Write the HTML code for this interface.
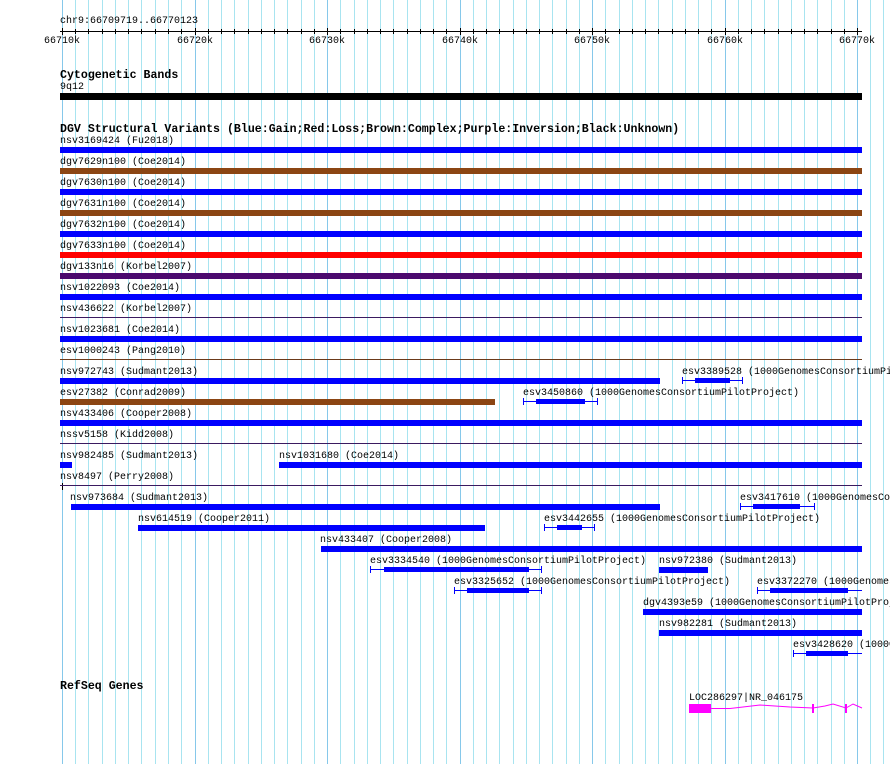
<!DOCTYPE html>
<html><head><meta charset="utf-8"><style>
html,body{overflow:hidden}
body{margin:0;width:890px;height:764px;background:#fff;position:relative;overflow:hidden;font-family:"Liberation Mono",monospace;font-size:10px;color:#000}
.t{position:absolute;white-space:nowrap;line-height:10px;margin-top:2px}
.h{position:absolute;white-space:nowrap;font-weight:bold;font-size:11.6px;line-height:12px;margin-top:2px}
.b{position:absolute;height:6px}
.l{position:absolute;height:1px}
</style></head><body>
<svg width="890" height="764" style="position:absolute;left:0;top:0">
<path stroke="#a8e4f0" stroke-width="1" d="M75.5 0V764M88.5 0V764M102.5 0V764M115.5 0V764M128.5 0V764M141.5 0V764M155.5 0V764M168.5 0V764M181.5 0V764M208.5 0V764M221.5 0V764M234.5 0V764M248.5 0V764M261.5 0V764M274.5 0V764M287.5 0V764M301.5 0V764M314.5 0V764M340.5 0V764M354.5 0V764M367.5 0V764M380.5 0V764M393.5 0V764M407.5 0V764M420.5 0V764M433.5 0V764M446.5 0V764M473.5 0V764M486.5 0V764M499.5 0V764M513.5 0V764M526.5 0V764M539.5 0V764M552.5 0V764M566.5 0V764M579.5 0V764M605.5 0V764M619.5 0V764M632.5 0V764M645.5 0V764M658.5 0V764M672.5 0V764M685.5 0V764M698.5 0V764M711.5 0V764M738.5 0V764M751.5 0V764M764.5 0V764M778.5 0V764M791.5 0V764M804.5 0V764M817.5 0V764M831.5 0V764M844.5 0V764M870.5 0V764M883.5 0V764"/>
<path stroke="#86c8ea" stroke-width="1" d="M62.5 0V764M195.5 0V764M327.5 0V764M460.5 0V764M592.5 0V764M725.5 0V764M857.5 0V764"/>
<path stroke="#000" stroke-width="1" d="M60 31.5H862M62.5 28V35M75.5 29V34M88.5 29V34M102.5 29V34M115.5 29V34M128.5 29V34M141.5 29V34M155.5 29V34M168.5 29V34M181.5 29V34M195.5 28V35M208.5 29V34M221.5 29V34M234.5 29V34M248.5 29V34M261.5 29V34M274.5 29V34M287.5 29V34M301.5 29V34M314.5 29V34M327.5 28V35M340.5 29V34M354.5 29V34M367.5 29V34M380.5 29V34M393.5 29V34M407.5 29V34M420.5 29V34M433.5 29V34M446.5 29V34M460.5 28V35M473.5 29V34M486.5 29V34M499.5 29V34M513.5 29V34M526.5 29V34M539.5 29V34M552.5 29V34M566.5 29V34M579.5 29V34M592.5 28V35M605.5 29V34M619.5 29V34M632.5 29V34M645.5 29V34M658.5 29V34M672.5 29V34M685.5 29V34M698.5 29V34M711.5 29V34M725.5 28V35M738.5 29V34M751.5 29V34M764.5 29V34M778.5 29V34M791.5 29V34M804.5 29V34M817.5 29V34M831.5 29V34M844.5 29V34M857.5 28V35"/>
<g stroke="#0000ff" stroke-width="1" fill="#0000ff">
<path d="M682 380.5H743M682.5 377V384M742.5 377V384M523 401.5H598M523.5 398V405M597.5 398V405M740 506.5H815M740.5 503V510M814.5 503V510M544 527.5H595M544.5 524V531M594.5 524V531M370 569.5H542M370.5 566V573M541.5 566V573M454 590.5H542M454.5 587V594M541.5 587V594M757 590.5H862M757.5 587V594M793 653.5H862M793.5 650V657"/>
<rect x="695" y="378" width="35" height="5" stroke="none"/>
<rect x="536" y="399" width="49" height="5" stroke="none"/>
<rect x="753" y="504" width="47" height="5" stroke="none"/>
<rect x="557" y="525" width="25" height="5" stroke="none"/>
<rect x="384" y="567" width="145" height="5" stroke="none"/>
<rect x="467" y="588" width="62" height="5" stroke="none"/>
<rect x="770" y="588" width="78" height="5" stroke="none"/>
<rect x="806" y="651" width="42" height="5" stroke="none"/>
</g>
<path stroke="#000" d="M62.5 483V490"/>
<g stroke="#ff00ff" fill="#ff00ff">
<rect x="689" y="704" width="22" height="9" stroke="none"/>
<path fill="none" d="M711 708.5L730 708.5 743 707 760 705 775 706 790 707 813 708 825 706 833 704 846 708 853 704 862 708"/>
<rect x="812" y="704" width="2" height="9" stroke="none"/>
<rect x="845" y="704" width="2" height="9" stroke="none"/>
</g>
</svg>

<div class="t" style="left:60px;top:15px">chr9:66709719..66770123</div>
<div class="t" style="left:44px;top:35px">66710k</div>
<div class="t" style="left:177px;top:35px">66720k</div>
<div class="t" style="left:309px;top:35px">66730k</div>
<div class="t" style="left:442px;top:35px">66740k</div>
<div class="t" style="left:574px;top:35px">66750k</div>
<div class="t" style="left:707px;top:35px">66760k</div>
<div class="t" style="left:839px;top:35px">66770k</div>

<div class="h" style="left:60px;top:68px">Cytogenetic Bands</div>
<div class="t" style="left:60px;top:81px">9q12</div>
<div class="b" style="left:60px;top:93px;width:802px;height:7px;background:#000"></div>

<div class="h" style="left:60px;top:122px">DGV Structural Variants (Blue:Gain;Red:Loss;Brown:Complex;Purple:Inversion;Black:Unknown)</div>

<div class="t" style="left:60px;top:135px">nsv3169424 (Fu2018)</div>
<div class="b" style="left:60px;top:147px;width:802px;background:#0000ff"></div>
<div class="t" style="left:60px;top:156px">dgv7629n100 (Coe2014)</div>
<div class="b" style="left:60px;top:168px;width:802px;background:#8b4513"></div>
<div class="t" style="left:60px;top:177px">dgv7630n100 (Coe2014)</div>
<div class="b" style="left:60px;top:189px;width:802px;background:#0000ff"></div>
<div class="t" style="left:60px;top:198px">dgv7631n100 (Coe2014)</div>
<div class="b" style="left:60px;top:210px;width:802px;background:#8b4513"></div>
<div class="t" style="left:60px;top:219px">dgv7632n100 (Coe2014)</div>
<div class="b" style="left:60px;top:231px;width:802px;background:#0000ff"></div>
<div class="t" style="left:60px;top:240px">dgv7633n100 (Coe2014)</div>
<div class="b" style="left:60px;top:252px;width:802px;background:#ff0000"></div>
<div class="t" style="left:60px;top:261px">dgv133n16 (Korbel2007)</div>
<div class="b" style="left:60px;top:273px;width:802px;background:#4b0a6e"></div>
<div class="t" style="left:60px;top:282px">nsv1022093 (Coe2014)</div>
<div class="b" style="left:60px;top:294px;width:802px;background:#0000ff"></div>
<div class="t" style="left:60px;top:303px">nsv436622 (Korbel2007)</div>
<div class="l" style="left:60px;top:317px;width:802px;background:#3a1a60"></div>
<div class="t" style="left:60px;top:324px">nsv1023681 (Coe2014)</div>
<div class="b" style="left:60px;top:336px;width:802px;background:#0000ff"></div>
<div class="t" style="left:60px;top:345px">esv1000243 (Pang2010)</div>
<div class="l" style="left:60px;top:359px;width:802px;background:#6b3a1a"></div>

<div class="t" style="left:60px;top:366px">nsv972743 (Sudmant2013)</div>
<div class="b" style="left:60px;top:378px;width:600px;background:#0000ff"></div>
<div class="t" style="left:682px;top:366px">esv3389528 (1000GenomesConsortiumPilotProject)</div>
<div class="t" style="left:60px;top:387px">esv27382 (Conrad2009)</div>
<div class="b" style="left:60px;top:399px;width:435px;background:#8b4513"></div>
<div class="t" style="left:523px;top:387px">esv3450860 (1000GenomesConsortiumPilotProject)</div>
<div class="t" style="left:60px;top:408px">nsv433406 (Cooper2008)</div>
<div class="b" style="left:60px;top:420px;width:802px;background:#0000ff"></div>
<div class="t" style="left:60px;top:429px">nssv5158 (Kidd2008)</div>
<div class="l" style="left:60px;top:443px;width:802px;background:#3a1a60"></div>
<div class="t" style="left:60px;top:450px">nsv982485 (Sudmant2013)</div>
<div class="b" style="left:60px;top:462px;width:12px;background:#0000ff"></div>
<div class="t" style="left:279px;top:450px">nsv1031680 (Coe2014)</div>
<div class="b" style="left:279px;top:462px;width:583px;background:#0000ff"></div>
<div class="t" style="left:60px;top:471px">nsv8497 (Perry2008)</div>
<div class="l" style="left:60px;top:485px;width:802px;background:#3a1a60"></div>

<div class="t" style="left:70px;top:492px">nsv973684 (Sudmant2013)</div>
<div class="b" style="left:71px;top:504px;width:589px;background:#0000ff"></div>
<div class="t" style="left:740px;top:492px">esv3417610 (1000GenomesConsortiumPilotProject)</div>
<div class="t" style="left:138px;top:513px">nsv614519 (Cooper2011)</div>
<div class="b" style="left:138px;top:525px;width:347px;background:#0000ff"></div>
<div class="t" style="left:544px;top:513px">esv3442655 (1000GenomesConsortiumPilotProject)</div>
<div class="t" style="left:320px;top:534px">nsv433407 (Cooper2008)</div>
<div class="b" style="left:321px;top:546px;width:541px;background:#0000ff"></div>
<div class="t" style="left:370px;top:555px">esv3334540 (1000GenomesConsortiumPilotProject)</div>
<div class="t" style="left:659px;top:555px">nsv972380 (Sudmant2013)</div>
<div class="b" style="left:659px;top:567px;width:49px;background:#0000ff"></div>
<div class="t" style="left:454px;top:576px">esv3325652 (1000GenomesConsortiumPilotProject)</div>
<div class="t" style="left:757px;top:576px">esv3372270 (1000GenomesConsortiumPilotProject)</div>
<div class="t" style="left:643px;top:597px">dgv4393e59 (1000GenomesConsortiumPilotProject)</div>
<div class="b" style="left:643px;top:609px;width:219px;background:#0000ff"></div>
<div class="t" style="left:659px;top:618px">nsv982281 (Sudmant2013)</div>
<div class="b" style="left:659px;top:630px;width:203px;background:#0000ff"></div>
<div class="t" style="left:793px;top:639px">esv3428620 (1000GenomesConsortiumPilotProject)</div>

<div class="h" style="left:60px;top:679px">RefSeq Genes</div>
<div class="t" style="left:689px;top:692px">LOC286297|NR_046175</div>
</body></html>
